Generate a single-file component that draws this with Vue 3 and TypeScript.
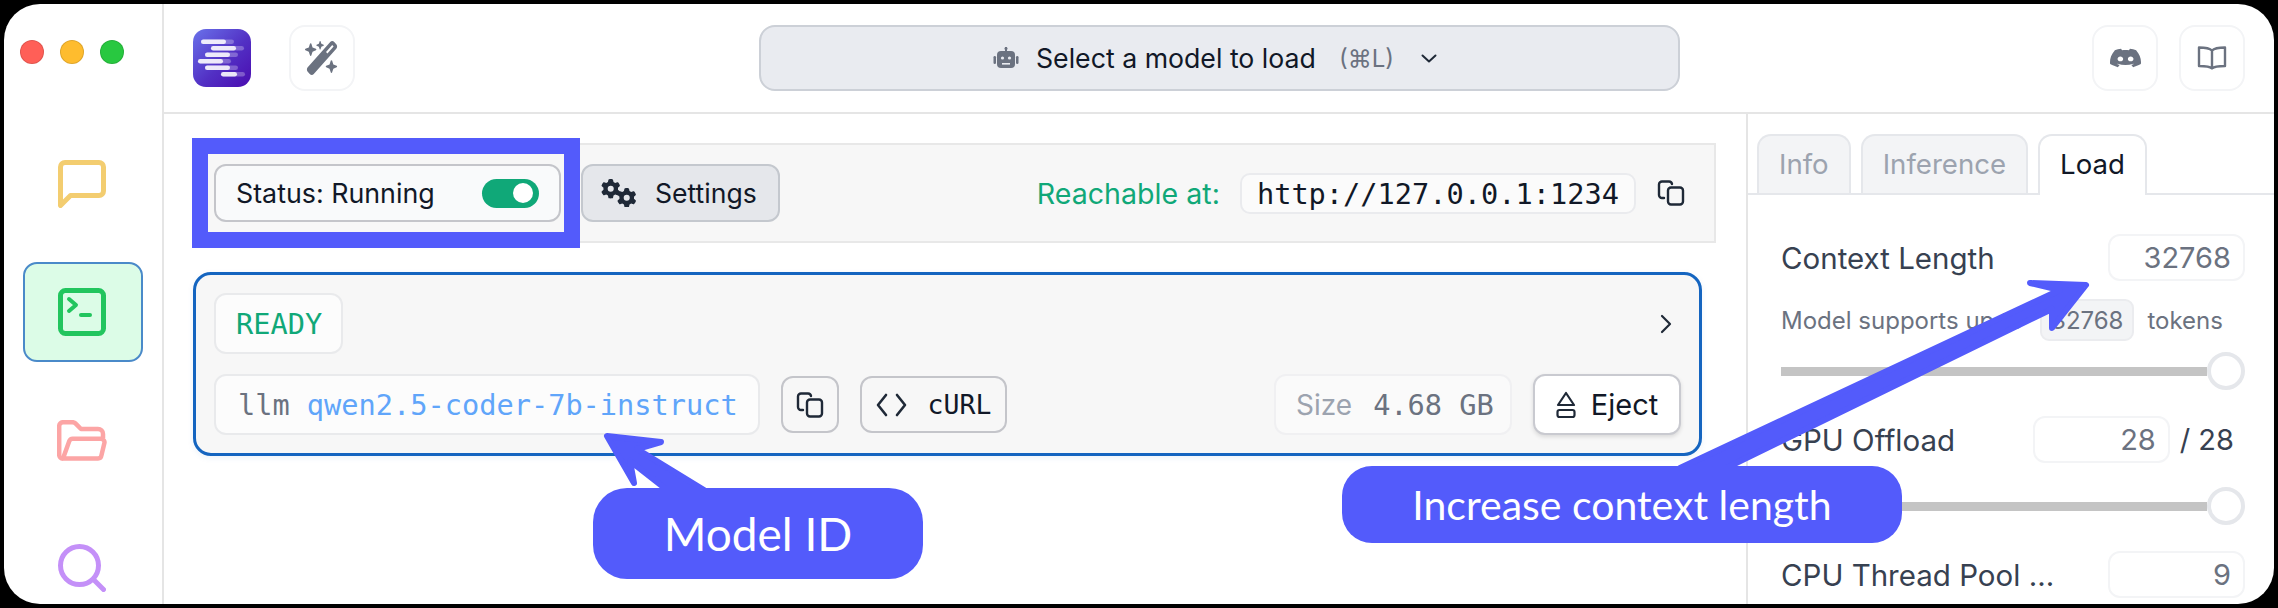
<template>
  <div class="frame">
    <div class="window">
      <aside class="sidebar">
        <div class="lights">
          <span class="light red"></span>
          <span class="light amber"></span>
          <span class="light green"></span>
        </div>
        <nav class="nav">
          <div class="nav-item">
            <svg width="48" height="48" viewBox="0 0 48 48" fill="none" stroke="#f3cd70" stroke-width="5" stroke-linejoin="round">
              <path d="M2.5 45.5V7a4.5 4.5 0 0 1 4.5-4.5h34A4.5 4.5 0 0 1 45.5 7v24a4.5 4.5 0 0 1-4.5 4.5H12.5z" />
            </svg>
          </div>
          <div class="nav-item active">
            <svg width="48" height="48" viewBox="0 0 48 48" fill="none" stroke="#22c55e" stroke-width="5" stroke-linecap="round" stroke-linejoin="round">
              <rect x="2.5" y="2.5" width="43" height="43" rx="5" />
              <path d="M11 11l7 6-7 6" stroke-width="4" />
              <path d="M23 27h9" stroke-width="4" />
            </svg>
          </div>
          <div class="nav-item">
            <svg width="50" height="41" viewBox="0 0 50 41" fill="none" stroke="#fca5a5" stroke-width="4.5" stroke-linejoin="round">
              <path d="M6 38.5a3.5 3.5 0 0 1-3.8-3.5V6a3.8 3.8 0 0 1 3.8-3.8h9.5c1.3 0 2.4.5 3.2 1.4L24 9h17a5 5 0 0 1 5 5v4" />
              <path d="M6 38.5L12.3 21a3.5 3.5 0 0 1 3.3-2.3H44a3.5 3.5 0 0 1 3.4 4.3l-3 12.5a3.5 3.5 0 0 1-3.4 3z" />
            </svg>
          </div>
          <div class="nav-item">
            <svg width="48" height="48" viewBox="0 0 48 48" fill="none" stroke="#c490f8" stroke-width="5" stroke-linecap="round">
              <circle cx="21.5" cy="21.5" r="19" />
              <path d="M36 36l9.5 9.5" />
            </svg>
          </div>
        </nav>
      </aside>

      <div class="main">
        <header class="topbar">
          <svg class="logo" width="58" height="58" viewBox="0 0 58 58">
            <defs>
              <linearGradient id="logoBg" x1="0" y1="0" x2="1" y2="1">
                <stop offset="0" stop-color="#6a72ea" />
                <stop offset="0.55" stop-color="#5230c4" />
                <stop offset="1" stop-color="#4a0cb0" />
              </linearGradient>
            </defs>
            <rect width="58" height="58" rx="13" fill="url(#logoBg)" />
            <g v-for="bar in logoBars" :key="bar.y">
              <rect :x="bar.x" :y="bar.y" :width="bar.w + 8" height="4.6" rx="2.3" fill="#fff" opacity="0.28" />
              <rect :x="bar.x" :y="bar.y" :width="bar.w" height="4.6" rx="2.3" fill="#fff" opacity="0.85" />
            </g>
          </svg>
          <button class="icon-btn wand">
            <svg width="34" height="34" viewBox="0 0 576 512" preserveAspectRatio="none" fill="#6b7280">
              <path d="M234.7 42.7L197 56.8c-3 1.1-5 4-5 7.2s2 6.1 5 7.2l37.7 14.1L248.8 123c1.1 3 4 5 7.2 5s6.1-2 7.2-5l14.1-37.7L315 71.2c3-1.1 5-4 5-7.2s-2-6.1-5-7.2L277.3 42.7 263.2 5c-1.1-3-4-5-7.2-5s-6.1 2-7.2 5L234.7 42.7zM46.1 395.4c-18.7 18.7-18.7 49.1 0 67.9l34.6 34.6c18.7 18.7 49.1 18.7 67.9 0L529.9 116.5c18.7-18.7 18.7-49.1 0-67.9L495.3 14.1c-18.7-18.7-49.1-18.7-67.9 0L46.1 395.4zM484.6 82.6l-105 105-23.3-23.3 105-105 23.3 23.3zM7.5 117.2C3 118.9 0 123.2 0 128s3 9.1 7.5 10.8L64 160l21.2 56.5c1.7 4.5 6 7.5 10.8 7.5s9.1-3 10.8-7.5L128 160l56.5-21.2c4.5-1.7 7.5-6 7.5-10.8s-3-9.1-7.5-10.8L128 96 106.8 39.5C105.1 35 100.8 32 96 32s-9.1 3-10.8 7.5L64 96 7.5 117.2zm352 256c-4.5 1.7-7.5 6-7.5 10.8s3 9.1 7.5 10.8L416 416l21.2 56.5c1.7 4.5 6 7.5 10.8 7.5s9.1-3 10.8-7.5L480 416l56.5-21.2c4.5-1.7 7.5-6 7.5-10.8s-3-9.1-7.5-10.8L480 352l-21.2-56.5c-1.7-4.5-6-7.5-10.8-7.5s-9.1 3-10.8 7.5L416 352l-56.5 21.2z" />
            </svg>
          </button>
          <button class="model-select">
            <svg width="26" height="22" viewBox="0 0 26 22" fill="#6b7280">
              <rect x="12" y="0" width="2" height="5" />
              <circle cx="13" cy="1.5" r="1.5" />
              <rect x="4" y="4" width="18" height="17" rx="4" />
              <rect x="0.5" y="9" width="2.5" height="8" rx="1.2" />
              <rect x="23" y="9" width="2.5" height="8" rx="1.2" />
              <circle cx="9.5" cy="11" r="1.6" fill="#e9ebf0" />
              <circle cx="16.5" cy="11" r="1.6" fill="#e9ebf0" />
              <rect x="9" y="16" width="8" height="1.6" fill="#e9ebf0" />
            </svg>
            <span class="model-label">Select a model to load</span>
            <span class="shortcut">(⌘L)</span>
            <svg width="16" height="9" viewBox="0 0 16 9" fill="none" stroke="#1f2937" stroke-width="2" stroke-linecap="round" stroke-linejoin="round">
              <path d="M1.5 1.5L8 7.5l6.5-6" />
            </svg>
          </button>
          <button class="icon-btn discord">
            <svg width="31" height="24" viewBox="0 0 24 24" preserveAspectRatio="none" fill="#6b7280">
              <path d="M20.317 4.3698a19.7913 19.7913 0 00-4.8851-1.5152.0741.0741 0 00-.0785.0371c-.211.3753-.4447.8648-.6083 1.2495-1.8447-.2762-3.68-.2762-5.4868 0-.1636-.3933-.4058-.8742-.6177-1.2495a.077.077 0 00-.0785-.037 19.7363 19.7363 0 00-4.8852 1.515.0699.0699 0 00-.0321.0277C.5334 9.0458-.319 13.5799.0992 18.0578a.0824.0824 0 00.0312.0561c2.0528 1.5076 4.0413 2.4228 5.9929 3.0294a.0777.0777 0 00.0842-.0276c.4616-.6304.8731-1.2952 1.226-1.9942a.076.076 0 00-.0416-.1057c-.6528-.2476-1.2743-.5495-1.8722-.8923a.077.077 0 01-.0076-.1277c.1258-.0943.2517-.1923.3718-.2914a.0743.0743 0 01.0776-.0105c3.9278 1.7933 8.18 1.7933 12.0614 0a.0739.0739 0 01.0785.0095c.1202.099.246.1981.3728.2924a.077.077 0 01-.0066.1276 12.2986 12.2986 0 01-1.873.8914.0766.0766 0 00-.0407.1067c.3604.698.7719 1.3628 1.225 1.9932a.076.076 0 00.0842.0286c1.961-.6067 3.9495-1.5219 6.0023-3.0294a.077.077 0 00.0313-.0552c.5004-5.177-.8382-9.6739-3.5485-13.6604a.061.061 0 00-.0312-.0286zM8.02 15.3312c-1.1825 0-2.1569-1.0857-2.1569-2.419 0-1.3332.9555-2.4189 2.157-2.4189 1.2108 0 2.1757 1.0952 2.1568 2.419 0 1.3332-.9555 2.4189-2.1569 2.4189zm7.9748 0c-1.1825 0-2.1569-1.0857-2.1569-2.419 0-1.3332.9554-2.4189 2.1569-2.4189 1.2108 0 2.1757 1.0952 2.1568 2.419 0 1.3332-.946 2.4189-2.1568 2.4189Z" />
            </svg>
          </button>
          <button class="icon-btn book">
            <svg width="30" height="24" viewBox="0 0 30 24" fill="none" stroke="#6b7280" stroke-width="2.4" stroke-linejoin="round">
              <path d="M15 4.5C13 2.5 9 1.5 2 1.5v18.5c7 0 11 .5 13 2.5 2-2 6-2.5 13-2.5V1.5c-7 0-11 1-13 3z" />
              <path d="M15 4.5v18" />
            </svg>
          </button>
        </header>

        <div class="content">
          <section class="server">
            <div class="server-bar">
              <div class="status-btn">
                <span>Status: Running</span>
                <span class="toggle"><span class="knob"></span></span>
              </div>
              <button class="settings-btn">
                <svg width="36" height="28" viewBox="0 0 36 28" fill="#1f2937">
                  <path v-for="g in gears" :key="g" :transform="g" :d="gearPath" fill-rule="evenodd" />
                </svg>
                <span>Settings</span>
              </button>
              <span class="reach-label">Reachable at:</span>
              <code class="url">http://127.0.0.1:1234</code>
              <svg class="copy-bare" width="28" height="26" viewBox="0 0 28 26" fill="none" stroke="#1f2937" stroke-width="2.4" stroke-linecap="round" stroke-linejoin="round">
                <path d="M7 18H5a3 3 0 0 1-3-3V4.5A3 3 0 0 1 5 1.5h7a3 3 0 0 1 3 2.5" />
                <rect x="11" y="7.5" width="15" height="17" rx="3" />
              </svg>
            </div>

            <div class="model-card">
              <div class="card-row">
                <span class="pill ready">READY</span>
                <svg class="chevron" width="12" height="20" viewBox="0 0 12 20" fill="none" stroke="#1f2937" stroke-width="2.2" stroke-linecap="round" stroke-linejoin="round">
                  <path d="M2 2l8 8-8 8" />
                </svg>
              </div>
              <div class="card-row lower">
                <span class="pill model-id"><span class="cmd">llm</span><span class="id">qwen2.5-coder-7b-instruct</span></span>
                <button class="outline-btn copy-btn">
                  <svg width="28" height="26" viewBox="0 0 28 26" fill="none" stroke="#1f2937" stroke-width="2.4" stroke-linecap="round" stroke-linejoin="round">
                    <path d="M7 18H5a3 3 0 0 1-3-3V4.5A3 3 0 0 1 5 1.5h7a3 3 0 0 1 3 2.5" />
                    <rect x="11" y="7.5" width="15" height="17" rx="3" />
                  </svg>
                </button>
                <button class="outline-btn curl-btn">
                  <svg width="31" height="24" viewBox="0 0 31 24" fill="none" stroke="#1f2937" stroke-width="2.6" stroke-linecap="round" stroke-linejoin="round">
                    <path d="M10 2L2 12l8 10M21 2l8 10-8 10" />
                  </svg>
                  <span>cURL</span>
                </button>
                <span class="pill size"><span class="size-label">Size</span><span class="size-value">4.68 GB</span></span>
                <button class="eject-btn">
                  <svg width="20" height="28" viewBox="0 0 20 28" fill="none" stroke="#1f2937" stroke-width="2.2" stroke-linejoin="round">
                    <path d="M10 2l8 12H2z" />
                    <rect x="1.5" y="19" width="17" height="7" rx="2" />
                  </svg>
                  <span>Eject</span>
                </button>
              </div>
            </div>
          </section>

          <aside class="panel">
            <div class="tabs">
              <div v-for="tab in tabs" :key="tab" class="tab" :class="{ current: tab === 'Load' }">{{ tab }}</div>
            </div>
            <div class="panel-body">
              <div class="field">
                <span class="field-label">Context Length</span>
                <span class="num wide">32768</span>
              </div>
              <div class="hint">
                <span>Model supports up to</span>
                <span class="badge">32768</span>
                <span>tokens</span>
              </div>
              <div class="slider"><span class="track"></span><span class="thumb"></span></div>
              <div class="field gpu">
                <span class="field-label">GPU Offload</span>
                <span class="gpu-value"><span class="num">28</span><span class="of">/ 28</span></span>
              </div>
              <div class="slider second"><span class="track"></span><span class="thumb"></span></div>
              <div class="field cpu">
                <span class="field-label">CPU Thread Pool ...</span>
                <span class="num">9</span>
              </div>
            </div>
          </aside>
        </div>
      </div>
    </div>

    <!-- annotations drawn over the screenshot -->
    <div class="highlight"></div>
    <svg class="arrows" width="2278" height="608" viewBox="0 0 2278 608" fill="#535bfb" stroke="#535bfb" stroke-width="6" stroke-linejoin="round">
      <polygon points="607,436 661,442 637,449 704,490 667,490 630,461 634,483" />
      <polygon points="2086,285 2030,283 2060,290 1680,468 1726,468 2052,309 2052,328" />
    </svg>
    <div class="callout model-callout">Model ID</div>
    <div class="callout context-callout">Increase context length</div>
  </div>
</template>

<script setup lang="ts">
const tabs = ['Info', 'Inference', 'Load']

const logoBars = [
  { x: 8, y: 10.5, w: 25 },
  { x: 18, y: 17, w: 25 },
  { x: 12, y: 23.5, w: 25 },
  { x: 5, y: 30, w: 25 },
  { x: 12, y: 36.5, w: 25 },
  { x: 28, y: 43, w: 16 },
]

const gears = ['translate(0 0) scale(0.038)', 'translate(16 9) scale(0.038)']
const gearPath =
  'M495.9 166.6c3.2 8.7 .5 18.4-6.4 24.6l-43.3 39.4c1.1 8.3 1.7 16.8 1.7 25.4s-.6 17.1-1.7 25.4l43.3 39.4c6.9 6.2 9.6 15.9 6.4 24.6c-4.4 11.9-9.7 23.3-15.8 34.3l-4.7 8.1c-6.6 11-14 21.4-22.1 31.2c-5.9 7.2-15.7 9.6-24.5 6.8l-55.7-17.7c-13.4 10.3-28.2 18.9-44 25.4l-12.5 57.1c-2 9.1-9 16.3-18.2 17.8c-13.8 2.3-28 3.5-42.5 3.5s-28.7-1.2-42.5-3.5c-9.2-1.5-16.2-8.7-18.2-17.8l-12.5-57.1c-15.8-6.5-30.6-15.1-44-25.4L83.1 425.9c-8.8 2.8-18.6 .3-24.5-6.8c-8.1-9.8-15.5-20.2-22.1-31.2l-4.7-8.1c-6.1-11-11.4-22.4-15.8-34.3c-3.2-8.7-.5-18.4 6.4-24.6l43.3-39.4C64.6 273.1 64 264.6 64 256s.6-17.1 1.7-25.4L22.4 191.2c-6.9-6.2-9.6-15.9-6.4-24.6c4.4-11.9 9.7-23.3 15.8-34.3l4.7-8.1c6.6-11 14-21.4 22.1-31.2c5.9-7.2 15.7-9.6 24.5-6.8l55.7 17.7c13.4-10.3 28.2-18.9 44-25.4l12.5-57.1c2-9.1 9-16.3 18.2-17.8C227.3 1.2 241.5 0 256 0s28.7 1.2 42.5 3.5c9.2 1.5 16.2 8.7 18.2 17.8l12.5 57.1c15.8 6.5 30.6 15.1 44 25.4l55.7-17.7c8.8-2.8 18.6-.3 24.5 6.8c8.1 9.8 15.5 20.2 22.1 31.2l4.7 8.1c6.1 11 11.4 22.4 15.8 34.3zM256 336a80 80 0 1 0 0-160 80 80 0 1 0 0 160z'
</script>

<style>
html,
body {
  margin: 0;
  background: #000;
}
</style>

<style scoped>
.frame {
  position: relative;
  width: 2278px;
  height: 608px;
  padding: 4px;
  box-sizing: border-box;
  background: #000;
  font-family: Inter, "Liberation Sans", sans-serif;
  color: #111827;
  overflow: hidden;
}

.window {
  display: flex;
  height: 600px;
  background: #fff;
  border-radius: 36px;
  overflow: hidden;
}

button {
  font: inherit;
  color: inherit;
  cursor: pointer;
}

/* sidebar */
.sidebar {
  width: 160px;
  flex: none;
  box-sizing: border-box;
  border-right: 2px solid #e5e5e5;
}

.lights {
  display: flex;
  gap: 16px;
  padding: 36px 0 0 16px;
}

.light {
  width: 24px;
  height: 24px;
  border-radius: 50%;
  box-sizing: border-box;
  border: 1px solid rgba(0, 0, 0, 0.12);
}

.red { background: #ff5f57; }
.amber { background: #febc2e; }
.green { background: #28c840; }

.nav {
  display: flex;
  flex-direction: column;
  gap: 28px;
  padding: 70px 0 0 19px;
}

.nav-item {
  display: flex;
  align-items: center;
  justify-content: center;
  flex: none;
  width: 120px;
  height: 100px;
  box-sizing: border-box;
  border-radius: 14px;
  padding-right: 2px;
}

.nav-item.active {
  background: #dcfce7;
  border: 2px solid #4a8ac9;
}

/* top bar */
.main {
  flex: 1;
  min-width: 0;
  display: flex;
  flex-direction: column;
}

.topbar {
  display: flex;
  align-items: center;
  height: 110px;
  flex: none;
  box-sizing: border-box;
  border-bottom: 2px solid #e5e5e5;
  padding: 0 0 0 29px;
}

.logo {
  flex: none;
}

.icon-btn {
  display: flex;
  align-items: center;
  justify-content: center;
  width: 66px;
  height: 66px;
  padding: 0;
  background: #fff;
  border: 2px solid #f3f4f6;
  border-radius: 16px;
}

.wand {
  margin-left: 38px;
}

.model-select {
  display: flex;
  align-items: center;
  justify-content: center;
  width: 921px;
  height: 66px;
  margin-left: 404px;
  padding: 0 9px 0 0;
  background: #e9ebf0;
  border: 2px solid #ccd0d7;
  border-radius: 16px;
  font-size: 26.7px;
}

.model-label {
  margin-left: 17px;
}

.shortcut {
  margin: 0 27px 0 23px;
  color: #6b7280;
  font-size: 24px;
}

.discord {
  margin-left: 412px;
}

.book {
  margin-left: 21px;
}

/* centre column */
.content {
  flex: 1;
  display: flex;
  min-height: 0;
}

.server {
  width: 1582px;
  flex: none;
  box-sizing: border-box;
  padding: 29px 30px 0 29px;
}

.server-bar {
  display: flex;
  align-items: center;
  height: 100px;
  box-sizing: border-box;
  padding: 0 29px 0 19px;
  background: #f7f7f7;
  border: 2px solid #e8e8e8;
}

.status-btn {
  display: flex;
  align-items: center;
  justify-content: space-between;
  width: 347px;
  height: 58px;
  box-sizing: border-box;
  padding: 0 20px 0 20px;
  background: #f9fafb;
  border: 2px solid #c4c5ca;
  border-radius: 12px;
  font-size: 26.8px;
}

.toggle {
  display: flex;
  align-items: center;
  justify-content: flex-end;
  width: 57px;
  height: 29px;
  padding-right: 6px;
  box-sizing: border-box;
  background: #10a878;
  border-radius: 15px;
}

.knob {
  width: 20px;
  height: 20px;
  background: #fff;
  border-radius: 50%;
}

.settings-btn {
  display: flex;
  align-items: center;
  gap: 18px;
  width: 199px;
  height: 58px;
  margin-left: 20px;
  padding: 0 0 0 18px;
  background: #e5e7eb;
  border: 2px solid #c4c8ce;
  border-radius: 12px;
  font-size: 26.6px;
}

.reach-label {
  margin-left: auto;
  color: #10a878;
  font-size: 28.6px;
}

.url {
  margin-left: 20px;
  padding: 0 15px;
  height: 41px;
  line-height: 38px;
  box-sizing: border-box;
  background: #fbfbfb;
  border: 2px solid #eaebee;
  border-radius: 10px;
  font-family: "DejaVu Sans Mono", monospace;
  font-size: 28.65px;
}

.copy-bare {
  margin-left: 21px;
}

/* model card */
.model-card {
  width: 1509px;
  box-sizing: border-box;
  margin-top: 29px;
  padding: 18px;
  background: #f7f7f7;
  border: 3px solid #1565c0;
  border-radius: 18px;
  box-shadow: 0 2px 6px rgba(21, 101, 192, 0.08);
}

.card-row {
  display: flex;
  align-items: center;
  justify-content: space-between;
}

.card-row.lower {
  margin-top: 20px;
  justify-content: flex-start;
}

.chevron {
  margin-right: 9px;
}

.pill {
  display: inline-flex;
  align-items: center;
  height: 61px;
  box-sizing: border-box;
  background: #fcfcfc;
  border: 2px solid #e9eaec;
  border-radius: 12px;
  font-family: "DejaVu Sans Mono", monospace;
  font-size: 28.65px;
}

.ready {
  width: 129px;
  padding-left: 20px;
  color: #10a878;
}

.model-id {
  width: 546px;
  padding-left: 22px;
  gap: 17px;
}

.cmd {
  color: #6b7280;
}

.id {
  color: #60a5fa;
}

.outline-btn {
  display: flex;
  align-items: center;
  justify-content: center;
  height: 57px;
  margin-left: 21px;
  padding: 0;
  background: transparent;
  border: 2px solid #c4c5ca;
  border-radius: 12px;
}

.copy-btn {
  width: 58px;
}

.curl-btn {
  width: 147px;
  gap: 21px;
  font-family: "DejaVu Sans Mono", monospace;
  font-size: 26.5px;
}

.size {
  width: 238px;
  margin-left: auto;
  padding-left: 20px;
  background: #fafafa;
  border-color: #f0f0f2;
}

.size-label {
  font-family: Inter, sans-serif;
  font-size: 28px;
  color: #9ca3af;
}

.size-value {
  margin-left: 21px;
  color: #6b7280;
}

.eject-btn {
  display: flex;
  align-items: center;
  justify-content: center;
  gap: 15px;
  width: 148px;
  height: 61px;
  margin-left: 21px;
  padding: 0;
  background: #fff;
  border: 2px solid #c9cad0;
  border-radius: 12px;
  box-shadow: 0 2px 4px rgba(0, 0, 0, 0.12);
  font-size: 29px;
}

/* right panel */
.panel {
  flex: 1;
  min-width: 0;
  box-sizing: border-box;
  border-left: 2px solid #e5e5e5;
}

.tabs {
  display: flex;
  gap: 10px;
  height: 61px;
  box-sizing: border-box;
  margin-top: 20px;
  padding-left: 9px;
  border-bottom: 2px solid #e5e7eb;
}

.tab {
  height: 59px;
  box-sizing: border-box;
  padding: 0 20px;
  line-height: 57px;
  background: #f3f4f6;
  border: 2px solid #e5e7eb;
  border-bottom: 0;
  border-radius: 14px 14px 0 0;
  font-size: 27.6px;
  color: #9ca3af;
}

.tab.current {
  height: 61px;
  background: #fff;
  color: #111827;
}

.panel-body {
  padding: 39px 29px 0 33px;
}

.field {
  display: flex;
  align-items: center;
  justify-content: space-between;
}

.field-label {
  font-size: 29.5px;
  color: #374151;
  white-space: nowrap;
}

.num {
  display: block;
  width: 137px;
  height: 47px;
  box-sizing: border-box;
  padding-right: 12px;
  line-height: 44px;
  text-align: right;
  background: #fff;
  border: 2px solid #f3f4f6;
  border-radius: 12px;
  font-size: 29px;
  color: #6b7280;
}

.hint {
  display: flex;
  align-items: center;
  gap: 13px;
  height: 42px;
  margin-top: 18px;
  font-size: 24px;
  color: #6b7280;
  white-space: nowrap;
}

.badge {
  margin-left: 4px;
  padding: 0 9px;
  height: 42px;
  line-height: 40px;
  box-sizing: border-box;
  background: #f3f4f6;
  border: 2px solid #ebecef;
  border-radius: 9px;
}

.slider {
  display: flex;
  align-items: center;
  margin-top: 11px;
}

.slider.second {
  margin-top: 24px;
}

.track {
  flex: 1;
  height: 9px;
  background: #c4c4c4;
}

.thumb {
  flex: none;
  width: 38px;
  height: 38px;
  box-sizing: border-box;
  background: #fff;
  border: 4px solid #e5e7eb;
  border-radius: 50%;
}

.gpu {
  margin-top: 26px;
}

.gpu-value {
  display: flex;
  align-items: center;
  gap: 10px;
}

.of {
  font-size: 29px;
  color: #374151;
  padding-right: 11px;
  white-space: nowrap;
}

.cpu {
  margin-top: 26px;
}

/* annotations */
.highlight {
  position: absolute;
  left: 192px;
  top: 138px;
  width: 388px;
  height: 110px;
  box-sizing: border-box;
  border: 16px solid #535bfb;
}

.arrows {
  position: absolute;
  left: 0;
  top: 0;
  pointer-events: none;
}

.callout {
  position: absolute;
  display: flex;
  align-items: center;
  justify-content: center;
  background: #535bfb;
  color: #fff;
  font-family: Lato, sans-serif;
}

.model-callout {
  left: 593px;
  top: 488px;
  width: 330px;
  height: 91px;
  border-radius: 34px;
  font-size: 46px;
}

.context-callout {
  left: 1342px;
  top: 466px;
  width: 560px;
  height: 77px;
  border-radius: 30px;
  font-size: 41px;
}
</style>
